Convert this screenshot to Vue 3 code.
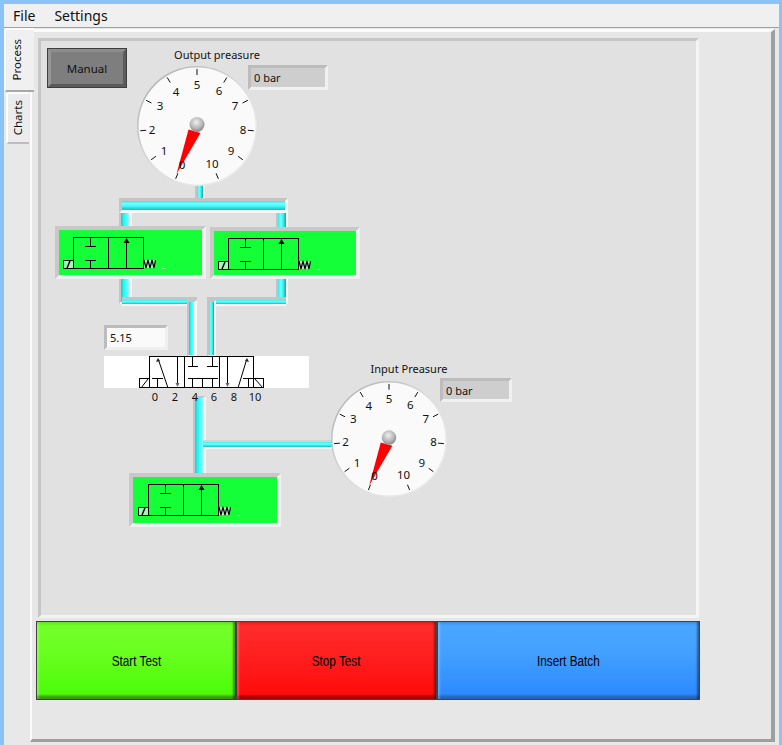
<script setup>
const ORIGIN = 41
const pos = (x, y, w, h) => ({ left: x - ORIGIN + 'px', top: y - ORIGIN + 'px', width: w + 'px', height: h + 'px' })

const pipes = [
  { x: 195, y: 182, w: 10, h: 19, d: 'v' },
  { x: 119, y: 199, w: 13, h: 105, d: 'v lit' },
  { x: 276, y: 199, w: 12, h: 105, d: 'v' },
  { x: 119, y: 198, w: 169, h: 15, d: 'h' },
  { x: 122, y: 297, w: 75, h: 9, d: 'h thin' },
  { x: 207, y: 297, w: 79, h: 9, d: 'h thin' },
  { x: 187, y: 300, w: 10, h: 57, d: 'v lit' },
  { x: 207, y: 300, w: 9, h: 57, d: 'v' },
  { x: 193, y: 396, w: 13, h: 82, d: 'v lit' },
  { x: 203, y: 440, w: 129, h: 9, d: 'h slim' }
]

const valves = [
  { x: 55, y: 226, w: 151, h: 53, ox: 0 },
  { x: 210, y: 227, w: 150, h: 52, ox: 0 },
  { x: 129, y: 473, w: 152, h: 54, ox: 1 }
]

const displays = [
  { x: 248, y: 65, w: 80, h: 25, text: '0 bar' },
  { x: 440, y: 378, w: 72, h: 24, text: '0 bar' }
]

const offsets = [[-15, 38], [-33, 24], [-45, 3], [-37, -21], [-21, -35], [0, -42], [22, -36], [38, -21], [46, 3], [34, 24], [15, 37]]

function buildGauge(cx, cy, r) {
  const k = r / 60
  const ticks = []
  for (let i = 0; i <= 10; i++) {
    const a = ((-158 + i * 31.6) * Math.PI) / 180
    const s = Math.sin(a)
    const c = -Math.cos(a)
    ticks.push({ x1: s * 51 * k, y1: c * 51 * k, x2: s * 57 * k, y2: c * 57 * k })
  }
  const labels = offsets.map((o, i) => ({ x: o[0] * k, y: o[1] * k, t: String(i) }))
  const needle = [[-8.5, 3.5], [3.5, 7], [-20.5, 48]].map((p) => `${p[0] * k},${p[1] * k}`).join(' ')
  return { cx, cy, r, ticks, labels, needle, hubY: -1.5 * k, hubR: 7.5 * k }
}
const gauges = [buildGauge(197, 125.5, 60), buildGauge(389, 438.5, 58)]

const fiveLabels = [['0', 155], ['2', 175], ['4', 195], ['6', 214], ['8', 234], ['10', 255]]
</script>

<template>
  <div class="window">
    <nav class="menu">
      <span>File</span>
      <span>Settings</span>
    </nav>
    <div class="body">
      <div class="tabs">
        <div class="tab active"><span>Process</span></div>
        <div class="tab"><span>Charts</span></div>
      </div>
      <div class="page">
        <div class="panel">
          <div class="canvas">
            <div
              v-for="(p, i) in pipes"
              :key="'p' + i"
              class="pipe"
              :class="p.d"
              :style="pos(p.x, p.y, p.w, p.h)"
            ><i></i></div>

            <button class="manual" :style="pos(47, 48, 80, 40)">Manual</button>

            <div class="caption" :style="pos(160, 47, 114, 16)">Output preasure</div>
            <div class="caption" :style="pos(352, 361, 114, 16)">Input Preasure</div>

            <div
              v-for="(d, i) in displays"
              :key="'d' + i"
              class="display"
              :style="pos(d.x, d.y, d.w, d.h)"
            >{{ d.text }}</div>

            <div class="display light" :style="pos(104, 325, 64, 25)">5.15</div>

            <svg
              v-for="(g, i) in gauges"
              :key="'g' + i"
              class="gauge"
              viewBox="-64 -64 128 128"
              :style="pos(g.cx - 64, g.cy - 64, 128, 128)"
            >
              <defs>
                <radialGradient :id="'hub' + i" cx="45%" cy="35%" r="70%">
                  <stop offset="0" stop-color="#efefef" />
                  <stop offset="0.6" stop-color="#b4b4b4" />
                  <stop offset="1" stop-color="#7c7c7c" />
                </radialGradient>
                <linearGradient :id="'rim' + i" x1="0" y1="0" x2="1" y2="1">
                  <stop offset="0" stop-color="#a8a8a8" />
                  <stop offset="0.5" stop-color="#dcdcdc" />
                  <stop offset="1" stop-color="#f4f4f4" />
                </linearGradient>
              </defs>
              <circle :r="g.r" :fill="'url(#rim' + i + ')'" />
              <circle :r="g.r - 1.5" fill="#fafafa" />
              <line
                v-for="(t, j) in g.ticks"
                :key="j"
                :x1="t.x1"
                :y1="t.y1"
                :x2="t.x2"
                :y2="t.y2"
                stroke="#111"
                stroke-width="1"
              />
              <polygon :points="g.needle" fill="#ff0000" />
              <text
                v-for="l in g.labels"
                :key="l.t"
                :x="l.x"
                :y="l.y"
                class="gauge-text"
                text-anchor="middle"
                dominant-baseline="central"
              >{{ l.t }}</text>
              <circle :cy="g.hubY" :r="g.hubR" :fill="'url(#hub' + i + ')'" />
            </svg>

            <div
              v-for="(v, i) in valves"
              :key="'v' + i"
              class="valve"
              :style="pos(v.x, v.y, v.w, v.h)"
            >
              <svg class="valve-symbol" viewBox="0 0 144 46" width="144" height="46">
                <g :transform="`translate(${v.ox} 0)`" fill="none" stroke="#000" stroke-width="1" shape-rendering="crispEdges">
                  <rect x="85" y="30" width="11" height="8" fill="#b4f7c0" stroke="none" />
                  <rect x="14.5" y="7.5" width="70" height="31" />
                  <line x1="49.5" y1="7" x2="49.5" y2="38" />
                  <line x1="67.5" y1="9" x2="67.5" y2="38" />
                  <line x1="31.5" y1="8" x2="31.5" y2="16" />
                  <line x1="26" y1="16.5" x2="37" y2="16.5" />
                  <line x1="26" y1="30.5" x2="37" y2="30.5" />
                  <line x1="31.5" y1="31" x2="31.5" y2="38" />
                  <rect x="4.5" y="30.5" width="10" height="8" fill="#a8f2b8" />
                  <line x1="103" y1="38.5" x2="106" y2="38.5" stroke="#9ff5b0" />
                </g>
                <g :transform="`translate(${v.ox} 0)`" fill="none" stroke="#000" stroke-width="1">
                  <polygon points="67.5,8 64.5,13 70.5,13" fill="#000" stroke="none" />
                  <line x1="8" y1="38" x2="11" y2="31" stroke-width="1.4" />
                  <polyline points="85,30 87,38 89,30 91,38 93,30 95,38 96.5,30" stroke-width="1.2" />
                </g>
              </svg>
            </div>

            <div class="five" :style="pos(104, 356, 205, 32)">
              <svg viewBox="104 356 205 50" width="205" height="50">
                <g fill="none" stroke="#000" stroke-width="1" shape-rendering="crispEdges">
                  <rect x="149.5" y="356.5" width="104" height="31" />
                  <line x1="177.5" y1="356" x2="177.5" y2="384" />
                  <line x1="184.5" y1="356" x2="184.5" y2="388" />
                  <line x1="219.5" y1="356" x2="219.5" y2="388" />
                  <line x1="227.5" y1="356" x2="227.5" y2="384" />
                  <rect x="139.5" y="378.5" width="10" height="9" />
                  <rect x="253.5" y="378.5" width="10" height="9" />
                  <line x1="157.5" y1="378" x2="157.5" y2="388" />
                  <line x1="152" y1="378.5" x2="163" y2="378.5" />
                  <line x1="248.5" y1="378" x2="248.5" y2="388" />
                  <line x1="243" y1="378.5" x2="254" y2="378.5" />
                  <line x1="192.5" y1="356" x2="192.5" y2="366" />
                  <line x1="188" y1="366.5" x2="198" y2="366.5" />
                  <line x1="212.5" y1="356" x2="212.5" y2="366" />
                  <line x1="207" y1="366.5" x2="218" y2="366.5" />
                  <line x1="192.5" y1="378" x2="192.5" y2="388" />
                  <line x1="188" y1="378.5" x2="198" y2="378.5" />
                  <line x1="202.5" y1="378" x2="202.5" y2="388" />
                  <line x1="198" y1="378.5" x2="207" y2="378.5" />
                  <line x1="212.5" y1="378" x2="212.5" y2="388" />
                  <line x1="207" y1="378.5" x2="218" y2="378.5" />
                </g>
                <g fill="none" stroke="#000" stroke-width="1">
                  <line x1="168" y1="388" x2="158.5" y2="360" />
                  <line x1="238" y1="388" x2="246.5" y2="360" />
                  <line x1="141" y1="388" x2="148" y2="379" />
                  <line x1="255" y1="379" x2="263" y2="388" />
                </g>
                <g fill="#222">
                  <polygon points="158,358 156,362 160,361" />
                  <polygon points="247,358 245,361 249,362" />
                  <polygon points="177.5,387 175.5,383 179.5,383" fill="#666" />
                  <polygon points="227.5,387 225.5,383 229.5,383" fill="#666" />
                </g>
              </svg>
            </div>
            <span
              v-for="l in fiveLabels"
              :key="l[0]"
              class="scale-label"
              :style="pos(l[1] - 10, 389, 20, 16)"
            >{{ l[0] }}</span>
          </div>
        </div>
        <div class="actions">
          <button class="action green"><span>Start Test</span></button>
          <button class="action red"><span>Stop Test</span></button>
          <button class="action blue"><span>Insert Batch</span></button>
        </div>
      </div>
    </div>
  </div>
</template>

<style>
html, body { margin: 0; padding: 0; background: #e8e8e8; }
</style>

<style scoped>
.window {
  width: 782px;
  height: 745px;
  box-sizing: border-box;
  border: solid #8ac3f7;
  border-width: 4px 3px 0 4px;
  background: #e8e8e8;
  display: flex;
  flex-direction: column;
  overflow: hidden;
  font-family: "Noto Sans", "Open Sans", sans-serif;
  font-size: 11px;
  color: #111;
}
.menu {
  height: 23px;
  flex: none;
  display: flex;
  align-items: center;
  gap: 19px;
  padding-left: 9px;
  background: #f0f0f0;
  border-bottom: 1px solid #a0a0a0;
  font-size: 14px;
  line-height: 23px;
}
.body {
  flex: 1;
  display: flex;
  min-height: 0;
}
.tabs {
  width: 26px;
  flex: none;
  display: flex;
  flex-direction: column;
  position: relative;
  z-index: 2;
}
.tab {
  box-sizing: border-box;
  width: 23px;
  height: 52px;
  margin-left: 2px;
  background: #ececec;
  border: solid #fdfdfd;
  border-width: 2px 0 0 2px;
  border-bottom: 2px solid #bdbdbd;
  border-radius: 3px 0 0 3px;
  padding-right: 2px;
  display: flex;
  align-items: center;
  justify-content: center;
  font-size: 11.5px;
}
.tab span {
  writing-mode: vertical-rl;
  transform: rotate(180deg);
  line-height: 1;
}
.tab.active {
  width: 30px;
  height: 64px;
  margin-left: 0;
  background: #f0f0f0;
  border-bottom: 2px solid #a8a8a8;
  padding-right: 6px;
}
.page {
  flex: none;
  width: 745px;
  height: 713px;
  margin-top: 1px;
  box-sizing: border-box;
  border: solid #fbfbfb;
  border-width: 3px 0 0 2px;
  border-right: 4px solid #9f9f9f;
  border-bottom: 3px solid #9f9f9f;
  background: #e7e7e7;
  padding: 6px 0 0 4px;
  display: flex;
  flex-direction: column;
  align-items: flex-start;
}
.panel {
  width: 661px;
  height: 580px;
  margin-left: 2px;
  box-sizing: border-box;
  border: 3px solid;
  border-color: #c6c6c6 #f4f4f4 #f4f4f4 #c6c6c6;
  background: #e1e1e1;
  flex: none;
}
.canvas {
  position: relative;
  width: 100%;
  height: 100%;
}
.pipe {
  position: absolute;
  box-sizing: border-box;
  border: 2px solid;
  border-color: #c4c4c4 #f6f6f6 #f6f6f6 #c4c4c4;
}
.pipe.v.lit { border-left-width: 2px; border-right-width: 3px; }
.pipe.h { border-width: 3px; }
.pipe.h.thin { border-width: 3px 0 2px 0; }
.pipe.h.slim { border-width: 2px 0 2px 0; border-top-color: #d2d2d2; }
.pipe i { display: block; width: 100%; height: 100%; }
.pipe.h i { background: linear-gradient(to bottom, #30e6e6, #7cffff 30%, #38f8f8 60%, #22b8b8); }
.pipe.v i { background: linear-gradient(to right, #38ecec, #74ffff 35%, #30f4f4 65%, #249c9c); }
.pipe.v.lit i { background: linear-gradient(to right, #22cccc, #30f6f6 40%, #4cffff 70%, #a4ffff); }
.manual {
  position: absolute;
  box-sizing: border-box;
  background: #7e7e7e;
  border: 4px solid;
  border-color: #8c8c8c #5c5c5c #5a5a5a #969696;
  outline: 1px solid #3e3e3e;
  outline-offset: -1px;
  font: inherit;
  font-size: 11.5px;
  color: #111;
  padding: 0;
}
.caption {
  position: absolute;
  text-align: center;
  line-height: 16px;
}
.display {
  position: absolute;
  box-sizing: border-box;
  border: 3px solid;
  border-color: #bcbcbc #f0f0f0 #f0f0f0 #bcbcbc;
  background: #cecece;
  padding-left: 3px;
  line-height: 19px;
}
.display.light { background: #fafafa; }
.gauge { position: absolute; overflow: visible; }
.gauge-text { font-size: 11.5px; fill: #111; }
.valve {
  position: absolute;
  box-sizing: border-box;
  border: 4px solid;
  border-color: #c8c8c8 #f0f0f0 #f0f0f0 #c8c8c8;
  background: #15ff38;
}
.valve-symbol { display: block; }
.five {
  position: absolute;
  background: #fff;
  overflow: visible;
}
.five svg { display: block; overflow: visible; }
.scale-label {
  position: absolute;
  text-align: center;
  line-height: 16px;
}
.actions {
  display: flex;
  margin-top: 3px;
  flex: none;
}
.action {
  box-sizing: border-box;
  height: 79px;
  padding: 0;
  border: 1px solid #424242;
  font-family: "Liberation Sans", sans-serif;
  font-size: 14px;
  color: #000;
  box-shadow: inset -3px 0 2px -1px rgba(0, 0, 0, 0.4), inset 3px 0 2px -1px rgba(255, 255, 255, 0.22);
}
.action span {
  display: inline-block;
  transform: scaleX(0.84);
}
.green {
  width: 200px;
  background: linear-gradient(to bottom, #58e81a 0, #73ff2a 4px, #69ff20 40%, #4cfc08 calc(100% - 5px), #3a9c0c calc(100% - 2px));
}
.red {
  width: 201px;
  background: linear-gradient(to bottom, #e81a1a 0, #ff2c2c 4px, #ff2020 40%, #ff0c0c calc(100% - 5px), #a80000 calc(100% - 2px));
}
.blue {
  width: 263px;
  background: linear-gradient(to bottom, #3c8fe8 0, #4aa6ff 4px, #43a0ff 40%, #2d8aff calc(100% - 5px), #2664b8 calc(100% - 2px));
}
</style>
